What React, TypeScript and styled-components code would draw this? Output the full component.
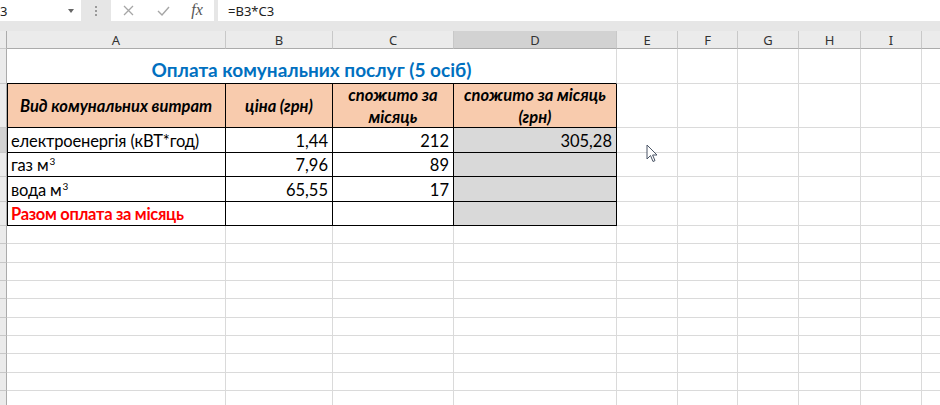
import React from 'react'
import styled, { createGlobalStyle } from 'styled-components'

// ---| Global |-------------------------------------------

const GlobalStyle = createGlobalStyle`
  html, body { margin:0; padding:0; background:#ffffff; }
  body {
    width:940px;
    height:405px;
    overflow:hidden;
    font-family:Lato, "Noto Sans", sans-serif;
  }
  * { box-sizing:border-box; }
`

// ---| Formula bar |--------------------------------------

const FormulaBar = styled.div`
  height:21px;
  background:#e6e6e6;
  display:flex;
  align-items:stretch;
  font-family:"Noto Sans", sans-serif;
  font-size:13px;
  color:#222;
`

const NameBox = styled.div`
  width:81px;
  background:#fff;
  position:relative;
  display:flex;
  align-items:center;
`

const DropArrow = styled.span`
  position:absolute;
  right:7px;
  top:9px;
  width:0;height:0;
  border-left:3px solid transparent;
  border-right:3px solid transparent;
  border-top:4px solid #666;
`

const Grip = styled.div`
  width:30px;
  display:flex;
  flex-direction:column;
  justify-content:center;
  align-items:center;
  gap:2px;
  span { width:2px; height:2px; background:#9a9a9a; }
`

const FxBox = styled.div`
  width:103px;
  background:#fff;
  display:grid;
  grid-template-columns:35px 34px 34px;
  align-items:center;
  justify-items:center;
  margin-right:4px;
`

const FxText = styled.span`
  font-family:"Liberation Serif", serif;
  font-style:italic;
  font-size:16px;
  color:#555;
  margin-top:-2px;
`

const FormulaInput = styled.div`
  flex:1;
  background:#fff;
  display:flex;
  align-items:center;
  padding-left:10px;
`

// ---| Sheet |--------------------------------------------

const Band = styled.div`
  height:10px;
  background:#e6e6e6;
`

const COLS = [7, 219, 107, 121, 163, 61, 60, 61, 62, 61, 61]
const ROWS = [18, 35, 44, 25, 24, 25, 24, 18, 19, 18, 18, 19, 18, 18, 19, 18, 15]

const Sheet = styled.div`
  position:relative;
  width:940px;
  height:374px;
  overflow:hidden;
  display:grid;
  grid-template-columns:${COLS.map(c => c + 'px').join(' ')};
  grid-template-rows:${ROWS.map(r => r + 'px').join(' ')};
  font-size:16.5px;
  color:#000;
`

const ColHead = styled.div<{ $sel?: boolean }>`
  background:${p => (p.$sel ? '#d2d2d2' : '#ebebeb')};
  border-right:1px solid #c8c8c8;
  border-bottom:1px solid #ababab;
  display:flex;
  justify-content:center;
  align-items:center;
  font-family:"Noto Sans", sans-serif;
  font-size:13px;
  color:#333;
`

const RowHead = styled.div<{ $sel?: boolean }>`
  background:${p => (p.$sel ? '#d2d2d2' : '#ebebeb')};
  border-right:1px solid #ababab;
  border-bottom:1px solid #c8c8c8;
`

type CellProps = {
  $span?: number
  $rb?: boolean
  $bb?: boolean
  $lb?: boolean
  $fill?: string
  $align?: 'flex-start' | 'center' | 'flex-end'
  $color?: string
  $bold?: boolean
  $italic?: boolean
  $wrap?: boolean
}

const Cell = styled.div<CellProps>`
  grid-column:span ${p => p.$span || 1};
  background:${p => p.$fill || '#fff'};
  border-right:1px solid ${p => (p.$rb ? '#000' : '#dadada')};
  border-bottom:1px solid ${p => (p.$bb ? '#000' : '#dadada')};
  box-shadow:${p => (p.$lb ? 'inset 1px 0 0 #000' : 'none')};
  display:flex;
  align-items:${p => (p.$wrap ? 'center' : 'flex-end')};
  justify-content:${p => p.$align || 'flex-start'};
  padding:${p => (p.$wrap ? '0 4px' : '0 4px 1px 4px')};
  color:${p => p.$color || '#000'};
  font-weight:${p => (p.$bold ? 700 : 400)};
  font-style:${p => (p.$italic ? 'italic' : 'normal')};
  white-space:${p => (p.$wrap ? 'normal' : 'nowrap')};
  text-align:center;
  line-height:${p => (p.$wrap ? '22px' : '20px')};
  overflow:hidden;
`

const Label = styled.span`
  font-size:16.5px;
  letter-spacing:-0.15px;
  sup {
    font-size:10px;
    line-height:0;
    vertical-align:super;
    margin-left:1px;
  }
`

const TotalLabel = styled.span`
  font-size:16.5px;
  letter-spacing:-0.3px;
`

const Title = styled(Cell)`
  font-size:19px;
  padding-bottom:3px;
`

const Pointer = styled.svg`
  position:absolute;
  left:646px;
  top:113px;
  width:12px;
  height:19px;
`

const XIcon = () => (
  <svg width="11" height="11" viewBox="0 0 11 11">
    <path d="M1 1 L10 10 M10 1 L1 10" stroke="#a6a6a6" strokeWidth="1.3" fill="none" />
  </svg>
)

const CheckIcon = () => (
  <svg width="13" height="10" viewBox="0 0 13 10">
    <path d="M1 5 L5 9 L12 1" stroke="#a6a6a6" strokeWidth="1.4" fill="none" />
  </svg>
)

const LETTERS = ['A', 'B', 'C', 'D', 'E', 'F', 'G', 'H', 'I', '']
const PEACH = '#f8cbad'
const GREY = '#d9d9d9'

const data = [
  { a: 'електроенергія (кВТ*год)', b: '1,44', c: '212', d: '305,28' },
  { a: 'газ м', sup: true, b: '7,96', c: '89', d: '' },
  { a: 'вода м', sup: true, b: '65,55', c: '17', d: '' },
]

const Empty = ({ n }: { n: number }) => (
  <>
    {Array.from({ length: n }).map((_, i) => (
      <Cell key={i} />
    ))}
  </>
)

export default function App() {
  return (
    <>
      <GlobalStyle />
      <FormulaBar>
        <NameBox>
          3
          <DropArrow />
        </NameBox>
        <Grip>
          <span />
          <span />
          <span />
        </Grip>
        <FxBox>
          <XIcon />
          <CheckIcon />
          <FxText>fx</FxText>
        </FxBox>
        <FormulaInput>=B3*C3</FormulaInput>
      </FormulaBar>
      <Band />
      <Sheet>
        <RowHead />
        {LETTERS.map((l, i) => (
          <ColHead key={i} $sel={l === 'D'}>
            {l}
          </ColHead>
        ))}

        <RowHead />
        <Title $span={4} $bb $align="center" $color="#0070c0" $bold>
          Оплата комунальних послуг (5 осіб)
        </Title>
        <Empty n={6} />

        <RowHead />
        <Cell $lb $rb $bb $fill={PEACH} $align="center" $bold $italic $wrap>
          Вид комунальних витрат
        </Cell>
        <Cell $rb $bb $fill={PEACH} $align="center" $bold $italic $wrap>
          ціна (грн)
        </Cell>
        <Cell $rb $bb $fill={PEACH} $align="center" $bold $italic $wrap>
          спожито за місяць
        </Cell>
        <Cell $rb $bb $fill={PEACH} $align="center" $bold $italic $wrap>
          спожито за місяць (грн)
        </Cell>
        <Empty n={6} />

        {data.map((r, i) => (
          <React.Fragment key={i}>
            <RowHead $sel={i === 0} />
            <Cell $lb $rb $bb>
              <Label>
                {r.a}
                {r.sup && <sup>3</sup>}
              </Label>
            </Cell>
            <Cell $rb $bb $align="flex-end">
              {r.b}
            </Cell>
            <Cell $rb $bb $align="flex-end">
              {r.c}
            </Cell>
            <Cell $rb $bb $align="flex-end" $fill={GREY}>
              {r.d}
            </Cell>
            <Empty n={6} />
          </React.Fragment>
        ))}

        <RowHead />
        <Cell $lb $rb $bb $color="#ff0000" $bold>
          <TotalLabel>Разом оплата за місяць</TotalLabel>
        </Cell>
        <Cell $rb $bb />
        <Cell $rb $bb />
        <Cell $rb $bb $fill={GREY} />
        <Empty n={6} />

        {ROWS.slice(7).map((_, i) => (
          <React.Fragment key={'e' + i}>
            <RowHead />
            <Empty n={10} />
          </React.Fragment>
        ))}

        <Pointer viewBox="0 0 12 19">
          <path
            d="M1 1 L1 15 L4.5 11.5 L7 17.5 L9 16.6 L6.6 11 L11 11 Z"
            fill="#fff"
            stroke="#4a5566"
            strokeWidth="1"
            strokeLinejoin="round"
          />
        </Pointer>
      </Sheet>
    </>
  )
}
